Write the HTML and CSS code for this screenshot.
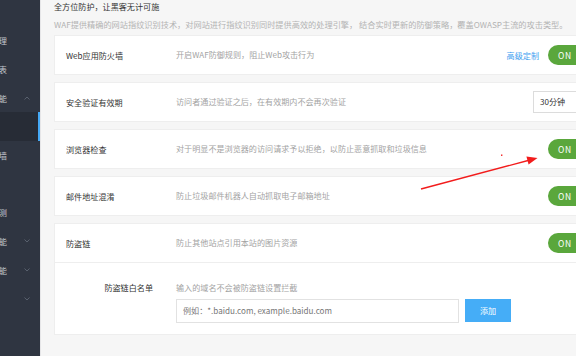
FILE: index.html
```html
<!DOCTYPE html>
<html lang="zh-CN">
<head>
<meta charset="utf-8">
<title>WAF</title>
<link rel="stylesheet" href="styles.css">
</head>
<body>
<div class="page">
  <aside class="sidebar">
    <div class="nav-item"><span class="nav-text">管理</span></div>
    <div class="nav-item"><span class="nav-text">报表</span></div>
    <div class="nav-item"><span class="nav-text">功能</span><svg class="chev" viewBox="0 0 6 4"><polyline points="0.5,3.5 3,1 5.5,3.5"/></svg></div>
    <div class="nav-item active"></div>
    <div class="nav-item"><span class="nav-text">防火墙</span></div>
    <div class="nav-item"></div>
    <div class="nav-item"><span class="nav-text">检测</span></div>
    <div class="nav-item"><span class="nav-text">功能</span><svg class="chev" viewBox="0 0 6 4"><polyline points="0.5,0.5 3,3 5.5,0.5"/></svg></div>
    <div class="nav-item"><span class="nav-text">功能</span><svg class="chev" viewBox="0 0 6 4"><polyline points="0.5,0.5 3,3 5.5,0.5"/></svg></div>
    <div class="nav-item"><svg class="chev" viewBox="0 0 6 4"><polyline points="0.5,0.5 3,3 5.5,0.5"/></svg></div>
  </aside>
  <main class="main">
    <h1 class="title">全方位防护，让黑客无计可施</h1>
    <p class="subtitle">WAF提供精确的网站指纹识别技术，对网站进行指纹识别同时提供高效的处理引擎， 结合实时更新的防御策略，覆盖OWASP主流的攻击类型。</p>
    <div class="list">
      <div class="card">
        <div class="row">
          <div class="label">Web应用防火墙</div>
          <div class="desc">开启WAF防御规则，阻止Web攻击行为</div>
          <div class="actions">
            <a class="link">高级定制</a>
            <span class="toggle">ON</span>
          </div>
        </div>
      </div>
      <div class="card">
        <div class="row">
          <div class="label">安全验证有效期</div>
          <div class="desc">访问者通过验证之后，在有效期内不会再次验证</div>
          <div class="actions">
            <div class="select">30分钟</div>
          </div>
        </div>
      </div>
      <div class="card">
        <div class="row">
          <div class="label">浏览器检查</div>
          <div class="desc">对于明显不是浏览器的访问请求予以拒绝，以防止恶意抓取和垃圾信息</div>
          <div class="actions">
            <span class="toggle">ON</span>
          </div>
        </div>
      </div>
      <div class="card">
        <div class="row">
          <div class="label">邮件地址混淆</div>
          <div class="desc">防止垃圾邮件机器人自动抓取电子邮箱地址</div>
          <div class="actions">
            <span class="toggle">ON</span>
          </div>
        </div>
      </div>
      <div class="card">
        <div class="row">
          <div class="label">防盗链</div>
          <div class="desc">防止其他站点引用本站的图片资源</div>
          <div class="actions">
            <span class="toggle">ON</span>
          </div>
        </div>
        <div class="whitelist">
          <div class="wl-label">防盗链白名单</div>
          <div class="wl-body">
            <div class="desc">输入的域名不会被防盗链设置拦截</div>
            <div class="wl-form">
              <div class="input">例如：*.baidu.com, example.baidu.com</div>
              <button class="btn">添加</button>
            </div>
          </div>
        </div>
      </div>
    </div>
  </main>
  <svg class="annot" viewBox="0 0 576 356" width="576" height="356">
    <line x1="421" y1="189" x2="529" y2="160.3" stroke="#f21c1c" stroke-width="1.4"/>
    <polygon points="537.5,158 528.6,164.6 526.4,156.4" fill="#f21c1c"/>
    <rect x="501" y="154.5" width="1.4" height="1.4" fill="#f21c1c"/>
  </svg>
</div>
</body>
</html>
```
FILE: styles.css
```css
* { box-sizing: border-box; }
html, body { margin: 0; padding: 0; }
body {
  width: 576px;
  height: 356px;
  overflow: hidden;
  font-family: "Noto Sans CJK SC", "Noto Sans", sans-serif;
  background: #f6f6f6;
}
.page {
  position: relative;
  display: flex;
  width: 576px;
  height: 356px;
  overflow: hidden;
}
.sidebar {
  width: 40px;
  flex: none;
  background: #2f3541;
  padding-top: 26px;
  display: flex;
  flex-direction: column;
}
.nav-item {
  position: relative;
  height: 28.7px;
  flex: none;
  display: flex;
  align-items: center;
  justify-content: flex-end;
  padding-right: 33px;
  overflow: hidden;
}
.nav-item.active {
  background: #272c36;
  box-shadow: inset -2px 0 0 #45a9f5;
}
.nav-text {
  font-size: 8.2px;
  line-height: 12px;
  color: #c3c7ce;
  white-space: nowrap;
}
.chev {
  position: absolute;
  left: 24px;
  top: 12.5px;
  width: 6px;
  height: 4px;
  fill: none;
  stroke: #5d6573;
  stroke-width: 0.9;
}
.main {
  flex: none;
  width: 560px;
  background: #f6f6f6;
  border-left: 1px solid #e6e6e8;
  padding-left: 13px;
}
.title {
  margin: 0;
  font-size: 8.1px;
  line-height: 14px;
  font-weight: normal;
  color: #333;
  white-space: nowrap;
}
.subtitle {
  margin: 3px 0 0;
  font-size: 8.2px;
  line-height: 14px;
  color: #b3b3b3;
  white-space: nowrap;
}
.list {
  margin-top: 4px;
  display: flex;
  flex-direction: column;
  gap: 7px;
}
.card {
  width: 546px;
  background: #fff;
  border: 1px solid #eeeeee;
}
.row {
  height: 38px;
  display: flex;
  align-items: center;
  padding-left: 11px;
  padding-right: 7px;
}
.label {
  width: 110px;
  flex: none;
  font-size: 8.1px;
  color: #333;
  white-space: nowrap;
}
.desc {
  font-size: 8.1px;
  line-height: 14px;
  color: #a3a3a3;
  white-space: nowrap;
}
.actions {
  margin-left: auto;
  display: flex;
  align-items: center;
  gap: 9px;
}
.link {
  font-size: 8.1px;
  color: #3d9ef0;
}
.toggle {
  width: 44px;
  height: 20px;
  border-radius: 10px;
  background: #5aa73c;
  color: #fff;
  font-size: 8.5px;
  letter-spacing: 0.6px;
  line-height: 20px;
  padding-left: 10px;
}
.select {
  width: 60px;
  height: 22px;
  border: 1px solid #dcdcdc;
  font-size: 8.1px;
  color: #333;
  line-height: 20px;
  padding-left: 6px;
  margin-right: -1px;
}
.whitelist {
  border-top: 1px solid #eeeeee;
  display: flex;
  padding: 18px 0 11px;
}
.wl-label {
  width: 121px;
  flex: none;
  text-align: right;
  padding-right: 23px;
  font-size: 8.1px;
  line-height: 14px;
  color: #333;
}
.wl-body {
  display: flex;
  flex-direction: column;
  gap: 4px;
}
.wl-form {
  display: flex;
  gap: 6px;
}
.input {
  width: 283px;
  height: 24px;
  border: 1px solid #e2e2e2;
  font-size: 8.1px;
  line-height: 22px;
  color: #777;
  padding-left: 6px;
  white-space: nowrap;
}
.btn {
  width: 46px;
  height: 23px;
  border: none;
  background: #45adf7;
  color: #fff;
  font-family: inherit;
  font-size: 8.1px;
  padding: 0;
}
.annot {
  position: absolute;
  left: 0;
  top: 0;
  pointer-events: none;
}
```
